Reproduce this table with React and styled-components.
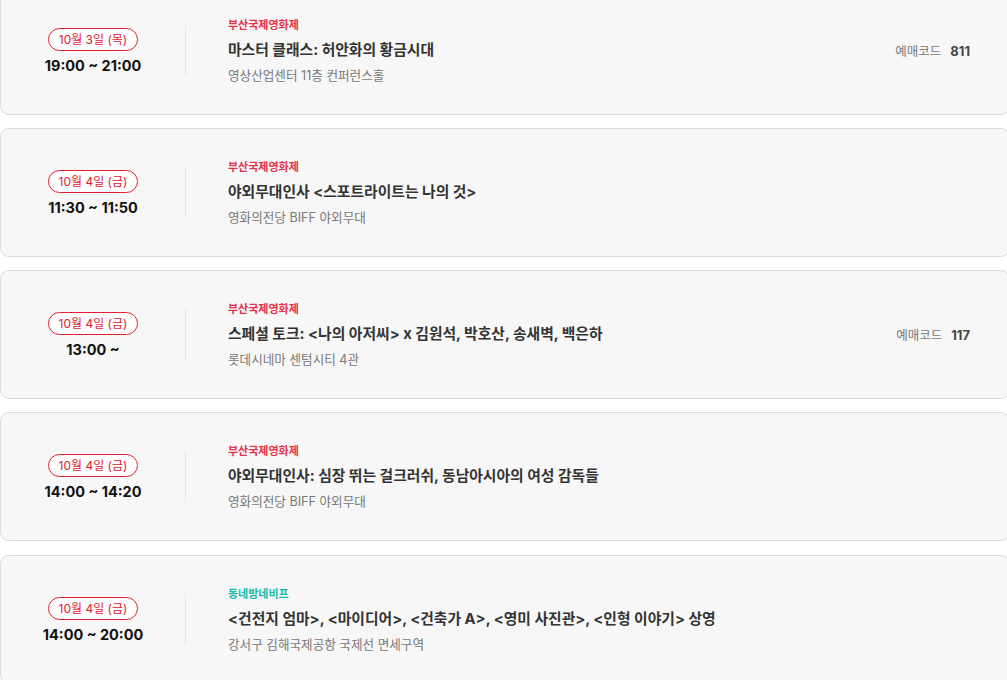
import styled, { createGlobalStyle } from "styled-components";

const events = [
  { date: "10월 3일 (목)", time: "19:00 ~ 21:00", org: "부산국제영화제", tone: "red", title: "마스터 클래스: 허안화의 황금시대", place: "영상산업센터 11층 컨퍼런스홀", code: "811" },
  { date: "10월 4일 (금)", time: "11:30 ~ 11:50", org: "부산국제영화제", tone: "red", title: "야외무대인사 <스포트라이트는 나의 것>", place: "영화의전당 BIFF 야외무대" },
  { date: "10월 4일 (금)", time: "13:00 ~", org: "부산국제영화제", tone: "red", title: "스페셜 토크: <나의 아저씨> x 김원석, 박호산, 송새벽, 백은하", place: "롯데시네마 센텀시티 4관", code: "117" },
  { date: "10월 4일 (금)", time: "14:00 ~ 14:20", org: "부산국제영화제", tone: "red", title: "야외무대인사: 심장 뛰는 걸크러쉬, 동남아시아의 여성 감독들", place: "영화의전당 BIFF 야외무대" },
  { date: "10월 4일 (금)", time: "14:00 ~ 20:00", org: "동네방네비프", tone: "teal", title: "<건전지 엄마>, <마이디어>, <건축가 A>, <영미 사진관>, <인형 이야기> 상영", place: "강서구 김해국제공항 국제선 면세구역" },
];

const GlobalStyle = createGlobalStyle`
  html, body {
    margin: 0;
    background: #fff;
    overflow: hidden;
  }
  body {
    font-family: Inter, "Noto Sans CJK KR", sans-serif;
  }
`;

const List = styled.div`
  display: flex;
  flex-direction: column;
  gap: 13.33px;
  margin-top: -14.5px;
  width: 1010px;
`;

const Card = styled.div`
  box-sizing: border-box;
  height: 129px;
  background: #f7f7f7;
  border: 1px solid #dcdcdc;
  border-radius: 9px;
  display: flex;
  align-items: center;
  padding-right: 39px;
`;

const When = styled.div`
  width: 184px;
  flex: none;
  display: flex;
  flex-direction: column;
  align-items: center;
  gap: 6px;
  padding-top: 1px;
`;

const Pill = styled.span`
  box-sizing: border-box;
  height: 23px;
  padding: 0 10px;
  border: 1px solid #e3202f;
  border-radius: 12px;
  color: #e3202f;
  font-size: 12px;
  line-height: 21px;
  background: #fff;
`;

const Time = styled.span`
  font-size: 14.5px;
  font-weight: 700;
  color: #111;
`;

const Divider = styled.div`
  width: 1px;
  height: 51px;
  background: #e6e6e6;
  flex: none;
`;

const Info = styled.div`
  flex: 1;
  display: flex;
  flex-direction: column;
  padding-left: 42px;
  padding-top: 2px;
`;

const Org = styled.span`
  font-size: 11px;
  font-weight: 700;
  color: ${(p) => (p.$tone === "teal" ? "#13b9a8" : "#e8304a")};
  line-height: 16px;
`;

const Title = styled.span`
  margin-top: 6px;
  font-size: 14.8px;
  font-weight: 700;
  color: #333;
  line-height: 22px;
`;

const Place = styled.span`
  margin-top: 5px;
  font-size: 12.6px;
  color: #777;
  line-height: 20px;
`;

const Code = styled.div`
  display: flex;
  align-items: baseline;
  gap: 9px;
  font-size: 12.5px;
  color: #777;

  b {
    color: #444;
    font-weight: 700;
    font-size: 13px;
  }
`;

export default function App() {
  return (
    <>
      <GlobalStyle />
      <List>
        {events.map((e, i) => (
          <Card key={i}>
            <When>
              <Pill>{e.date}</Pill>
              <Time>{e.time}</Time>
            </When>
            <Divider />
            <Info>
              <Org $tone={e.tone}>{e.org}</Org>
              <Title>{e.title}</Title>
              <Place>{e.place}</Place>
            </Info>
            {e.code && (
              <Code>
                예매코드 <b>{e.code}</b>
              </Code>
            )}
          </Card>
        ))}
      </List>
    </>
  );
}
